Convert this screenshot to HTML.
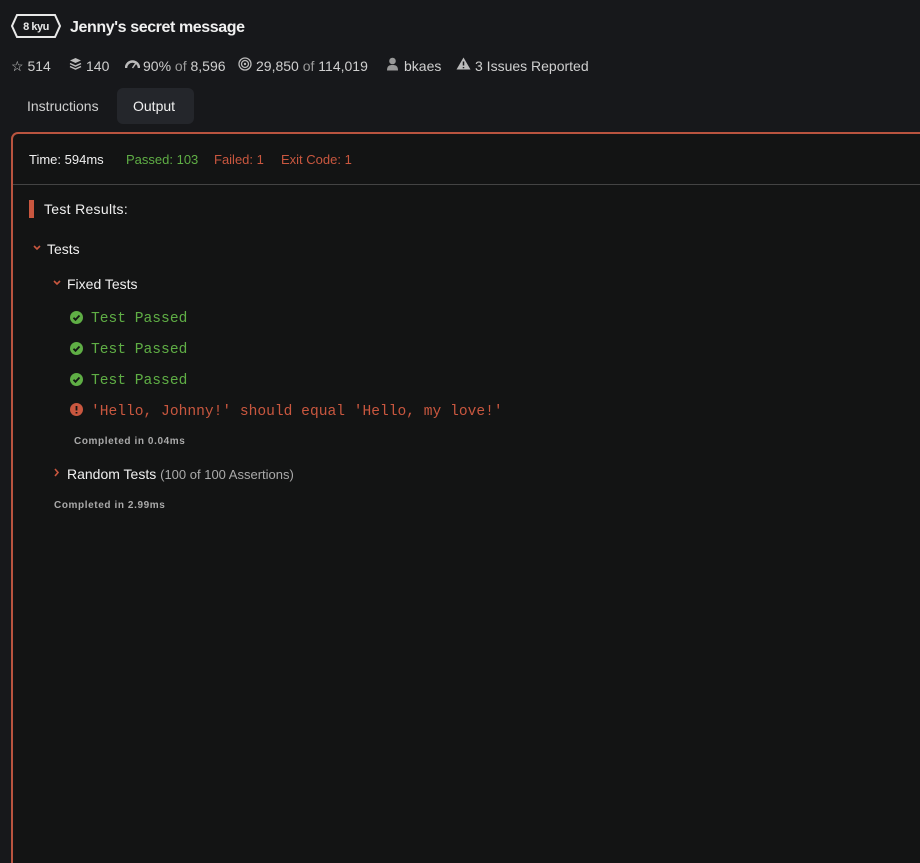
<!DOCTYPE html>
<html><head><meta charset="utf-8"><style>
*{margin:0;padding:0;box-sizing:border-box}
html,body{width:920px;height:863px;overflow:hidden}
body{background:#17181b;font-family:"Liberation Sans",sans-serif;color:#d8d8d8;position:relative}
.abs{position:absolute;white-space:nowrap}
.hex{left:11px;top:14px;width:50px;height:24px}
.title{left:70px;top:19px;font-size:16px;font-weight:bold;color:#f0f0f0;letter-spacing:-0.4px}
.stats{top:58px;font-size:14px;color:#cfcfcf}
.stats span.g{color:#9a9a9a}
.tab{top:88px;height:36px;line-height:36px;font-size:14px;color:#cfcfcf;padding:0 16px}
.tab.on{background:#24262b;border-radius:6px;color:#f0f0f0}
.panel{left:11px;top:132px;width:909px;height:731px;border:2px solid #b9543f;border-right:none;border-bottom:none;border-radius:7px 0 0 0;background:#131414}
.hdr{top:152px;font-size:13px}
.line{left:13px;top:184px;width:907px;height:1px;background:#444}
.mono{font-family:"Liberation Mono",monospace;font-size:14.6px}
.small{font-size:10px;font-weight:bold;color:#aaa;letter-spacing:.6px}
</style></head><body>
<svg class="abs hex" viewBox="0 0 50 24"><polygon points="6,1 44,1 49,12 44,23 6,23 1,12" fill="none" stroke="#e8e8e8" stroke-width="2"/><text x="25" y="16" text-anchor="middle" font-family="Liberation Sans" font-weight="bold" font-size="11" fill="#e8e8e8" letter-spacing="-0.5">8 kyu</text></svg>
<div class="abs title">Jenny's secret message</div>

<div class="abs stats" style="left:11px">☆ 514</div>
<svg class="abs" style="left:69px;top:57px" width="13" height="13" viewBox="0 0 13 13"><path d="M6.5 1L12 3.5 6.5 6 1 3.5Z" fill="#bbb"/><path d="M1 6.5l5.5 2.5 5.5-2.5M1 9.5l5.5 2.5 5.5-2.5" stroke="#bbb" stroke-width="1.5" fill="none"/></svg>
<div class="abs stats" style="left:86px">140</div>
<svg class="abs" style="left:125px;top:60px" width="15" height="9" viewBox="0 0 15 9"><path d="M1 8A6.5 6.5 0 0 1 14 8" stroke="#bbb" stroke-width="2.5" fill="none"/><path d="M7.5 8L11 3" stroke="#bbb" stroke-width="1.5"/></svg>
<div class="abs stats" style="left:143px">90% <span class="g">of</span> 8,596</div>
<svg class="abs" style="left:238px;top:57px" width="14" height="14" viewBox="0 0 14 14"><circle cx="7" cy="7" r="6" stroke="#bbb" stroke-width="1.3" fill="none"/><circle cx="7" cy="7" r="3.5" stroke="#bbb" stroke-width="1.3" fill="none"/><circle cx="7" cy="7" r="1.2" fill="#bbb"/></svg>
<div class="abs stats" style="left:256px">29,850 <span class="g">of</span> 114,019</div>
<svg class="abs" style="left:386px;top:57px" width="13" height="14" viewBox="0 0 13 14"><circle cx="6.5" cy="4" r="3.3" fill="#999"/><path d="M1 13.5C1 9 3 8 6.5 8S12 9 12 13.5Z" fill="#999"/></svg>
<div class="abs stats" style="left:404px">bkaes</div>
<svg class="abs" style="left:456px;top:57px" width="15" height="13" viewBox="0 0 15 13"><path d="M7.5 0.5L14.5 12.5H0.5Z" fill="#bbb"/><path d="M7.5 4.5v4M7.5 10v1.3" stroke="#17181b" stroke-width="1.5"/></svg>
<div class="abs stats" style="left:475px">3 Issues Reported</div>

<div class="abs tab" style="left:11px">Instructions</div>
<div class="abs tab on" style="left:117px;width:77px">Output</div>

<div class="abs panel"></div>
<div class="abs hdr" style="left:29px;color:#f0f0f0">Time: 594ms</div>
<div class="abs hdr" style="left:126px;color:#5fae45">Passed: 103</div>
<div class="abs hdr" style="left:214px;color:#c9573f">Failed: 1</div>
<div class="abs hdr" style="left:281px;color:#c9573f">Exit Code: 1</div>
<div class="abs line"></div>

<div class="abs" style="left:29px;top:200px;width:5px;height:18px;background:#c9573f"></div>
<div class="abs" style="left:44px;top:201px;font-size:14px;color:#f0f0f0;letter-spacing:.3px">Test Results:</div>

<svg class="abs" style="left:33px;top:245px" width="8" height="6" viewBox="0 0 8 6"><path d="M1 1l3 3 3-3" stroke="#c9573f" stroke-width="1.6" fill="none"/></svg>
<div class="abs" style="left:47px;top:241px;font-size:14px;color:#f0f0f0">Tests</div>
<svg class="abs" style="left:53px;top:280px" width="8" height="6" viewBox="0 0 8 6"><path d="M1 1l3 3 3-3" stroke="#c9573f" stroke-width="1.6" fill="none"/></svg>
<div class="abs" style="left:67px;top:276px;font-size:14px;color:#f0f0f0">Fixed Tests</div>

<svg class="abs" style="left:70px;top:311px" width="13" height="13" viewBox="0 0 13 13"><circle cx="6.5" cy="6.5" r="6.5" fill="#5fae45"/><path d="M3.5 6.8l2 2 4-4.3" stroke="#131414" stroke-width="1.8" fill="none"/></svg>
<div class="abs mono" style="left:91px;top:311px;color:#5fae45">Test Passed</div>
<svg class="abs" style="left:70px;top:342px" width="13" height="13" viewBox="0 0 13 13"><circle cx="6.5" cy="6.5" r="6.5" fill="#5fae45"/><path d="M3.5 6.8l2 2 4-4.3" stroke="#131414" stroke-width="1.8" fill="none"/></svg>
<div class="abs mono" style="left:91px;top:342px;color:#5fae45">Test Passed</div>
<svg class="abs" style="left:70px;top:373px" width="13" height="13" viewBox="0 0 13 13"><circle cx="6.5" cy="6.5" r="6.5" fill="#5fae45"/><path d="M3.5 6.8l2 2 4-4.3" stroke="#131414" stroke-width="1.8" fill="none"/></svg>
<div class="abs mono" style="left:91px;top:373px;color:#5fae45">Test Passed</div>
<svg class="abs" style="left:70px;top:403px" width="13" height="13" viewBox="0 0 13 13"><circle cx="6.5" cy="6.5" r="6.5" fill="#c9573f"/><path d="M6.5 3v4.5M6.5 9v1.5" stroke="#131414" stroke-width="1.8"/></svg>
<div class="abs mono" style="left:91px;top:404px;color:#c9573f">'Hello, Johnny!' should equal 'Hello, my love!'</div>
<div class="abs small" style="left:74px;top:436px">Completed in 0.04ms</div>

<svg class="abs" style="left:54px;top:468px" width="6" height="9" viewBox="0 0 6 9"><path d="M1 1l3 3.5-3 3.5" stroke="#c9573f" stroke-width="1.6" fill="none"/></svg>
<div class="abs" style="left:67px;top:466px;font-size:14px;color:#f0f0f0">Random Tests <span style="font-size:13px;color:#aaa">(100 of 100 Assertions)</span></div>
<div class="abs small" style="left:54px;top:500px">Completed in 2.99ms</div>
</body></html>
